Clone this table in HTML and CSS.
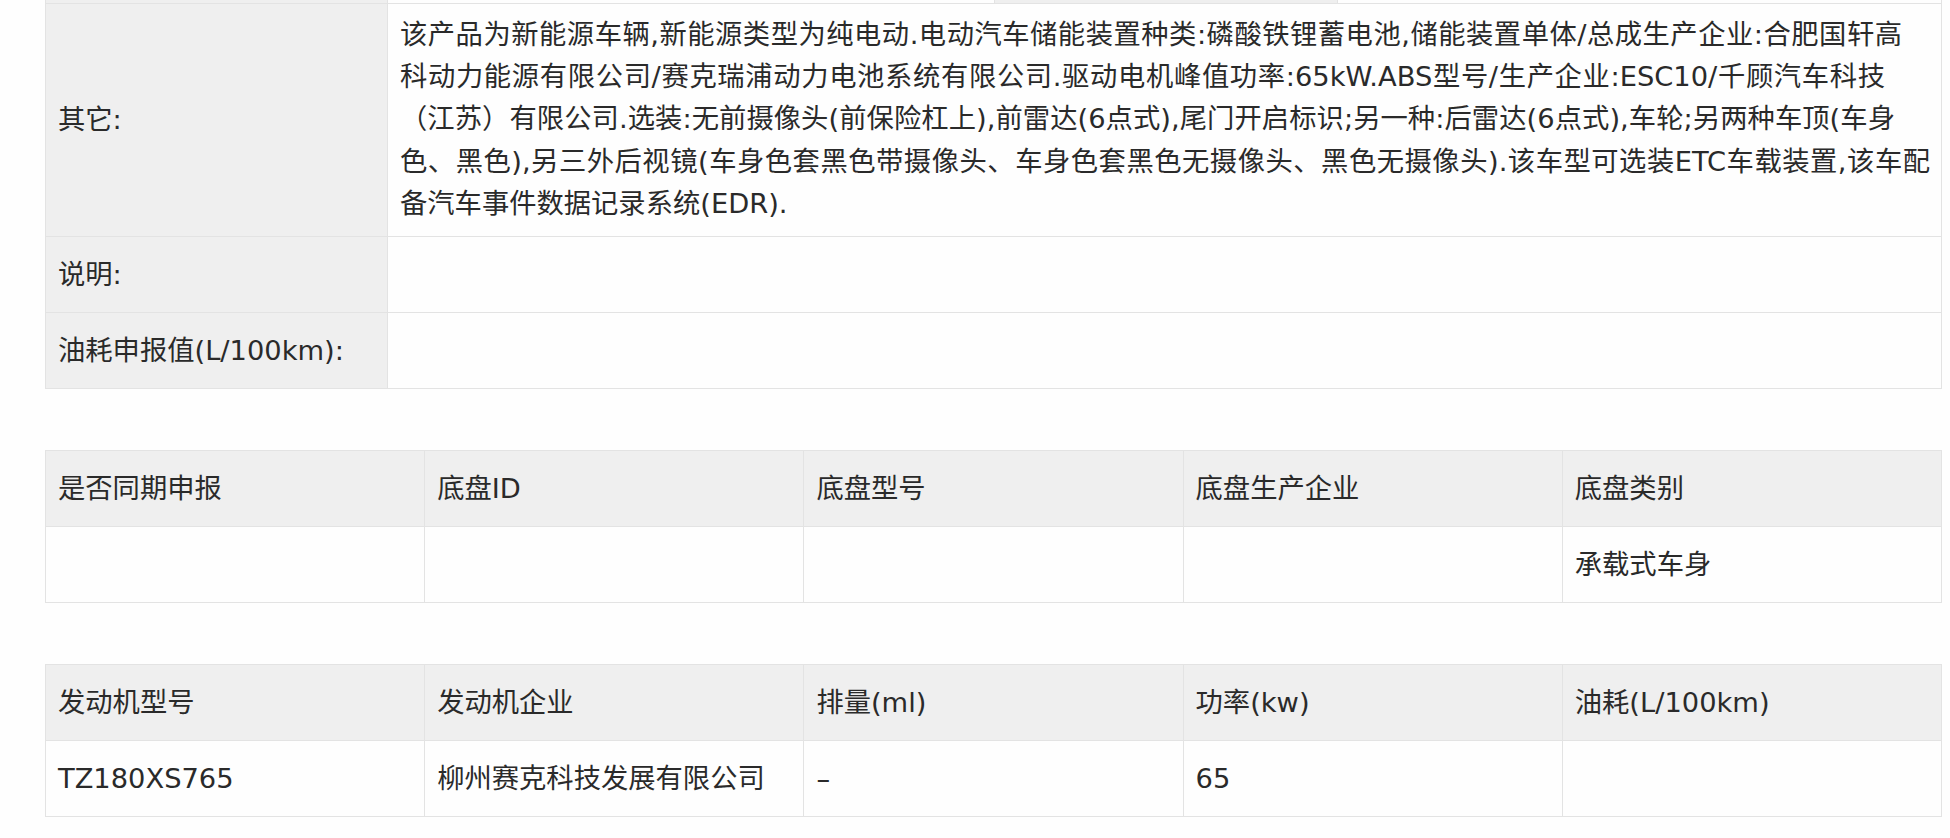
FILE: index.html
```html
<!DOCTYPE html>
<html lang="zh-CN">
<head>
<meta charset="utf-8">
<title>车辆参数</title>
<link rel="stylesheet" href="styles.css">
</head>
<body>
<div class="page">
  <table class="info">
    <colgroup>
      <col class="c-label"><col class="c-v1"><col class="c-l2"><col class="c-v2">
    </colgroup>
    <tr class="cut">
      <td class="lab"></td><td></td><td class="lab"></td><td></td>
    </tr>
    <tr>
      <td class="lab">其它:</td>
      <td colspan="3" class="long">
        <div class="ln l1">该产品为新能源车辆,新能源类型为纯电动.电动汽车储能装置种类:磷酸铁锂蓄电池,储能装置单体/总成生产企业:合肥国轩高</div>
        <div class="ln l2">科动力能源有限公司/赛克瑞浦动力电池系统有限公司.驱动电机峰值功率:65kW.ABS型号/生产企业:ESC10/千顾汽车科技</div>
        <div class="ln l3">（江苏）有限公司.选装:无前摄像头(前保险杠上),前雷达(6点式),尾门开启标识;另一种:后雷达(6点式),车轮;另两种车顶(车身</div>
        <div class="ln l4">色、黑色),另三外后视镜(车身色套黑色带摄像头、车身色套黑色无摄像头、黑色无摄像头).该车型可选装ETC车载装置,该车配</div>
        <div class="ln">备汽车事件数据记录系统(EDR).</div>
      </td>
    </tr>
    <tr>
      <td class="lab">说明:</td>
      <td colspan="3"></td>
    </tr>
    <tr>
      <td class="lab">油耗申报值(L/100km):</td>
      <td colspan="3"></td>
    </tr>
  </table>

  <table class="grid">
    <tr class="head">
      <td>是否同期申报</td><td>底盘ID</td><td>底盘型号</td><td>底盘生产企业</td><td>底盘类别</td>
    </tr>
    <tr>
      <td></td><td></td><td></td><td></td><td>承载式车身</td>
    </tr>
  </table>

  <table class="grid">
    <tr class="head">
      <td>发动机型号</td><td>发动机企业</td><td>排量(ml)</td><td>功率(kw)</td><td>油耗(L/100km)</td>
    </tr>
    <tr>
      <td>TZ180XS765</td><td>柳州赛克科技发展有限公司</td><td>–</td><td>65</td><td></td>
    </tr>
  </table>
</div>
</body>
</html>
```

FILE: styles.css
```css
html, body {
  margin: 0;
  padding: 0;
  background: #fefefe;
}

.page {
  padding: 0 8px 0 45px;
  font-family: "DejaVu Sans", "Noto Sans CJK SC", sans-serif;
  font-size: 27.3px;
  color: #2a2a2a;
  display: flex;
  flex-direction: column;
  gap: 61px;
}

table {
  border-collapse: collapse;
  width: 1897px;
  table-layout: fixed;
}

td {
  border: 1px solid #e3e3e3;
  padding: 0 12px;
  height: 75px;
  line-height: 42px;
  vertical-align: middle;
  text-align: left;
  white-space: nowrap;
  overflow: hidden;
}

.info .c-label { width: 342px; }
.info .c-v1 { width: 607px; }
.info .c-l2 { width: 343px; }
.info .c-v2 { width: auto; }

.info {
  margin-top: -1px;
}

.info .cut td {
  height: 4px;
  padding: 0;
  border-top: none;
}

.lab {
  background: #efefef;
}

.info td.long {
  height: auto;
  padding: 10px 12px 11px 12px;
  line-height: 42.2px;
}

.ln {
  white-space: nowrap;
}

.l1, .l2, .l3, .l4 {
  text-align: justify;
  text-align-last: justify;
  text-justify: inter-character;
}

.l1 { width: 1502px; }
.l2 { width: 1485px; }
.l3 { width: 1495px; }
.l4 { width: 1530px; }

.grid .head td {
  background: #efefef;
}
```
